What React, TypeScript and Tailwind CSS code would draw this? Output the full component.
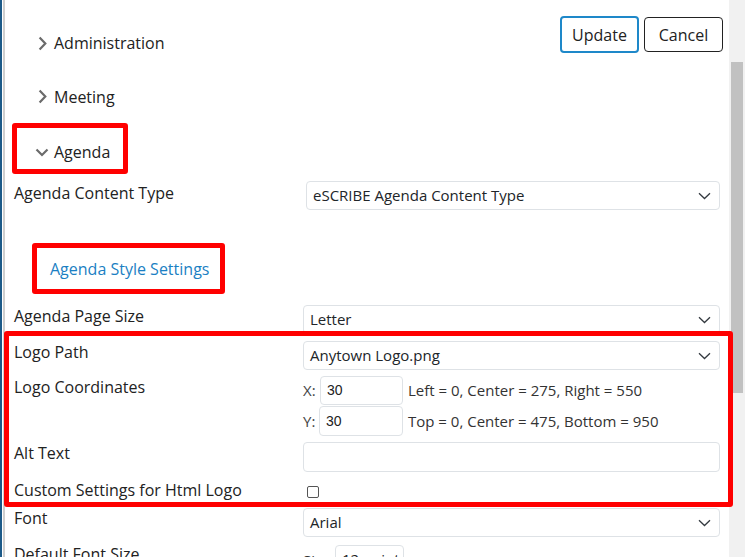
import React from "react";

function Chevron() {
  return (
    <svg width="13" height="8" viewBox="0 0 13 8" className="shrink-0">
      <path d="M1 1.2l5.5 5.3L12 1.2" fill="none" stroke="#343a40" strokeWidth="1.3" />
    </svg>
  );
}

function Select({ value, className }: { value: string; className: string }) {
  return (
    <div
      className={`h-[29px] border border-[#dee2e6] rounded-[4px] flex items-center justify-between pl-[6px] pr-[8px] text-[15px] text-[#212529] bg-white ${className}`}
    >
      <span>{value}</span>
      <Chevron />
    </div>
  );
}

function NavRight({ label, h }: { label: string; h: string }) {
  return (
    <div className={`flex items-center pl-[33px] ${h}`}>
      <svg width="9" height="15" viewBox="0 0 9 15" className="shrink-0">
        <path d="M1.6 1.6L7.3 7.5L1.6 13.4" fill="none" stroke="#6b6b6b" strokeWidth="2.2" />
      </svg>
      <span className="ml-[7px] text-[16px] text-[#222]">{label}</span>
    </div>
  );
}

const label = "w-[289px] shrink-0 text-[16px] leading-[22px] text-[#222]";

export default function App() {
  return (
    <div className="w-[745px] h-[557px] overflow-hidden flex bg-white font-['Open_Sans',sans-serif] text-[#333]">
      <div className="w-[2px] shrink-0 bg-[#1c5a88]" />
      <div className="w-[1px] shrink-0 bg-white" />
      <div className="w-[2px] shrink-0 bg-[#cfcfcf]" />

      <div className="flex-1 pt-[16px] min-w-0">
        {/* top row */}
        <div className="flex justify-between">
          <NavRight label="Administration" h="h-[54px]" />
          <div className="flex items-start gap-[5px] mr-[6px]">
            <button className="w-[79px] h-[37px] border-2 border-[#1e88c9] rounded-[4px] text-[16px] text-[#222] bg-white">
              Update
            </button>
            <button className="w-[79px] h-[35px] mt-[1px] border border-[#222] rounded-[4px] text-[16px] text-[#222] bg-white">
              Cancel
            </button>
          </div>
        </div>
        <NavRight label="Meeting" h="h-[53px]" />

        {/* Agenda highlighted */}
        <div className="ml-[7px] w-[116px] h-[51px] border-[5px] border-[#ff0000] rounded-[3px] flex items-center pt-[7px] pl-[18px]">
          <svg width="14" height="9" viewBox="0 0 14 9" className="shrink-0">
            <path d="M1.5 1.5L7 7L12.5 1.5" fill="none" stroke="#6b6b6b" strokeWidth="2.2" />
          </svg>
          <span className="ml-[5px] text-[16px] text-[#222]">Agenda</span>
        </div>

        {/* Agenda Content Type */}
        <div className="flex items-start mt-[7px] pl-[9px] pr-[9px]">
          <div className={`${label} mt-[1px]`}>Agenda Content Type</div>
          <Select value="eSCRIBE Agenda Content Type" className="flex-1 ml-[3px]" />
        </div>

        {/* Style settings */}
        <div className="mt-[33px] ml-[27px] w-[193px] h-[51px] border-[5px] border-[#ff0000] rounded-[3px] flex items-center pl-[13px]">
          <span className="text-[16px] text-[#1b7fc3]">Agenda Style Settings</span>
        </div>

        {/* Page size */}
        <div className="flex items-start mt-[11px] pl-[9px] pr-[9px]">
          <div className={label}>Agenda Page Size</div>
          <Select value="Letter" className="flex-1" />
        </div>

        {/* Logo box */}
        <div className="relative z-10 -mt-[3px] -ml-[1px] w-[729px] border-[5px] border-[#ff0000] rounded-[3px] pl-[5px] pr-[8px] pt-[5px] pb-[1px]">
          <div className="flex items-start">
            <div className={label}>Logo Path</div>
            <Select value="Anytown Logo.png" className="flex-1" />
          </div>

          <div className="flex items-start mt-[6px]">
            <div className={label}>Logo Coordinates</div>
            <div className="flex flex-col gap-[1px] text-[15px] text-[#333]">
              <div className="flex items-center">
                <span className="w-[17px] text-[#444]">X:</span>
                <div className="w-[83px] h-[29px] border border-[#dee2e6] rounded-[4px] flex items-center pl-[6px] text-[14px] text-[#222] font-['Liberation_Sans',sans-serif]">
                  30
                </div>
                <span className="ml-[5px]">Left = 0, Center = 275, Right = 550</span>
              </div>
              <div className="flex items-center">
                <span className="w-[16px] text-[#444]">Y:</span>
                <div className="w-[84px] h-[30px] border border-[#dee2e6] rounded-[4px] flex items-center pl-[6px] text-[14px] text-[#222] font-['Liberation_Sans',sans-serif]">
                  30
                </div>
                <span className="ml-[5px]">Top = 0, Center = 475, Bottom = 950</span>
              </div>
            </div>
          </div>

          <div className="flex items-start mt-[6px]">
            <div className={label}>Alt Text</div>
            <div className="flex-1 h-[30px] border border-[#dee2e6] rounded-[4px] bg-white" />
          </div>

          <div className="flex items-start mt-[7px]">
            <div className={label}>Custom Settings for Html Logo</div>
            <div className="ml-[4px] mt-[7px] w-[12px] h-[12px] border border-[#555] rounded-[2px] bg-white" />
          </div>
        </div>

        {/* Font */}
        <div className="flex items-start pl-[9px] pr-[9px]">
          <div className={label}>Font</div>
          <Select value="Arial" className="flex-1 mt-[1px] h-[28px]" />
        </div>

        <div className="flex items-start mt-[6px] pl-[9px] pr-[9px]">
          <div className={label}>Default Font Size</div>
          <div className="flex items-start text-[15px]">
            <span className="mt-[6px] w-[32px]">Size:</span>
            <div className="mt-[2px] w-[69px] h-[29px] border border-[#dee2e6] rounded-[4px] flex items-center pl-[6px] text-[15px] text-[#222]">
              12 point
            </div>
          </div>
        </div>
      </div>

      <div className="w-[16px] shrink-0 bg-[#f1f1f1] pt-[62px]">
        <div className="ml-[2px] w-[12px] h-[331px] bg-[#c1c1c1]" />
      </div>
    </div>
  );
}
